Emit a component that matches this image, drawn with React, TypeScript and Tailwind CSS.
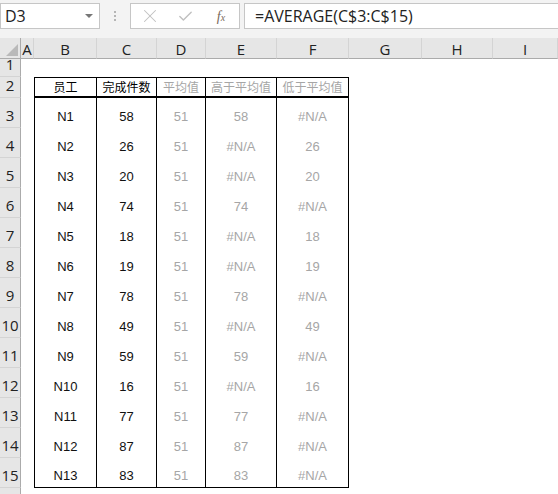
import { X, Check } from 'lucide-react';

const rows = [
  ['N1', '58', '51', '58', '#N/A'],
  ['N2', '26', '51', '#N/A', '26'],
  ['N3', '20', '51', '#N/A', '20'],
  ['N4', '74', '51', '74', '#N/A'],
  ['N5', '18', '51', '#N/A', '18'],
  ['N6', '19', '51', '#N/A', '19'],
  ['N7', '78', '51', '78', '#N/A'],
  ['N8', '49', '51', '#N/A', '49'],
  ['N9', '59', '51', '59', '#N/A'],
  ['N10', '16', '51', '#N/A', '16'],
  ['N11', '77', '51', '77', '#N/A'],
  ['N12', '87', '51', '87', '#N/A'],
  ['N13', '83', '51', '83', '#N/A'],
];

const cols = ['A', 'B', 'C', 'D', 'E', 'F', 'G', 'H', 'I'];

const gridCols = 'grid grid-cols-[21px_13px_63px_60px_49px_71px_72px_73px_71px_1fr]';
const cellFont = { fontFamily: '"Liberation Sans", Arial, sans-serif' };
const cjkFont = { fontFamily: '"Noto Sans CJK SC", "Liberation Sans", sans-serif' };
const uiFont = { fontFamily: '"Open Sans", "Liberation Sans", sans-serif' };

function RowHead({ n, h }: { n: number; h: string }) {
  return (
    <div
      className={`${h} flex items-end justify-center border-r border-b border-r-[#ababab] border-b-[#d4d4d4] bg-[#e6e6e6] text-[15px] leading-none text-[#222] pb-[4px]`}
      style={uiFont}
    >
      {n}
    </div>
  );
}

function Head({ text, gray, first }: { text: string; gray?: boolean; first?: boolean }) {
  return (
    <div
      className={`h-[21px] border-t border-r border-b-2 border-black ${first ? 'border-l' : ''} flex items-center justify-center text-[12px] leading-none ${gray ? 'text-[#a6a6a6]' : 'text-black'}`}
      style={cjkFont}
    >
      {text}
    </div>
  );
}

export default function App() {
  return (
    <div className="w-[558px] h-[494px] overflow-hidden bg-white">
      {/* Formula bar */}
      <div className="h-[38px] bg-[#f3f3f3] flex items-start pt-[3px]">
        <div className="w-[100px] h-[26px] bg-white border border-[#c6c6c6] flex items-center justify-between pl-[4px] pr-[6px]">
          <span className="text-[16px] text-[#222]" style={uiFont}>D3</span>
          <span className="w-0 h-0 border-l-[4px] border-r-[4px] border-t-[4px] border-l-transparent border-r-transparent border-t-[#777]" />
        </div>
        <div className="w-[30px] h-[26px] flex flex-col items-center justify-center gap-[2px]">
          <span className="w-[2px] h-[2px] bg-[#b5b5b5]" />
          <span className="w-[2px] h-[2px] bg-[#b5b5b5]" />
          <span className="w-[2px] h-[2px] bg-[#b5b5b5]" />
        </div>
        <div className="w-[110px] h-[26px] bg-white border border-[#c6c6c6] flex items-center">
          <div className="w-[36px] flex justify-center pl-[2px]">
            <X className="w-[22px] h-[22px] text-[#c0c0c0]" strokeWidth={1.1} />
          </div>
          <div className="w-[36px] flex justify-center">
            <Check className="w-[17px] h-[17px] text-[#c0c0c0]" strokeWidth={2} />
          </div>
          <div className="w-[36px] flex justify-center">
            <span className="italic text-[14px] text-[#7a6a5a]" style={{ fontFamily: '"Liberation Serif", serif' }}>
              f<span className="text-[10px]">x</span>
            </span>
          </div>
        </div>
        <div className="ml-[4px] flex-1 h-[26px] bg-white border border-r-0 border-[#c6c6c6] flex items-center pl-[10px]">
          <span className="text-[16px] text-[#222]" style={uiFont}>
            =AVERAGE(C$3:C$15)
          </span>
        </div>
      </div>

      {/* Sheet */}
      <div className={gridCols}>
        {/* Column headers */}
        <div className="h-[21px] bg-[#e6e6e6] border-r border-b border-r-[#ababab] border-b-[#ababab] flex items-end justify-end pr-[2px] pb-[2px]">
          <svg width="12" height="12" viewBox="0 0 12 12">
            <polygon points="12,0 12,12 0,12" fill="#b9b9b9" />
          </svg>
        </div>
        {cols.map((c) => (
          <div
            key={c}
            className="h-[21px] bg-[#e6e6e6] border-r border-b border-r-[#d4d4d4] border-b-[#ababab] flex items-center justify-center text-[15px] text-[#222] leading-none pt-[2px]"
            style={uiFont}
          >
            {c}
          </div>
        ))}

        {/* Row 1 */}
        <RowHead n={1} h="h-[18px]" />
        {cols.map((c) => (
          <div key={c} className="h-[18px]" />
        ))}

        {/* Row 2 */}
        <RowHead n={2} h="h-[21px]" />
        <div className="h-[21px]" />
        <Head text="员工" first />
        <Head text="完成件数" />
        <Head text="平均值" gray />
        <Head text="高于平均值" gray />
        <Head text="低于平均值" gray />
        <div className="h-[21px]" />
        <div className="h-[21px]" />
        <div className="h-[21px]" />

        {/* Data rows */}
        {rows.map((r, i) => {
          const last = i === rows.length - 1;
          const b = last ? 'border-b' : '';
          return [
            <RowHead key={`h${i}`} n={i + 3} h="h-[30px]" />,
            <div key={`a${i}`} className="h-[30px]" />,
            ...r.map((v, j) => (
              <div
                key={`c${i}-${j}`}
                className={`h-[30px] border-r border-black ${j === 0 ? 'border-l' : ''} ${b} flex items-end justify-center pb-[5px] text-[13px] leading-none ${j < 2 ? 'text-[#111]' : 'text-[#a6a6a6]'}`}
                style={cellFont}
              >
                {v}
              </div>
            )),
            <div key={`g${i}`} className="h-[30px]" />,
            <div key={`hh${i}`} className="h-[30px]" />,
            <div key={`ii${i}`} className="h-[30px]" />,
          ];
        })}

        {/* Row 16 partial */}
        <RowHead n={16} h="h-[30px]" />
      </div>
    </div>
  );
}
